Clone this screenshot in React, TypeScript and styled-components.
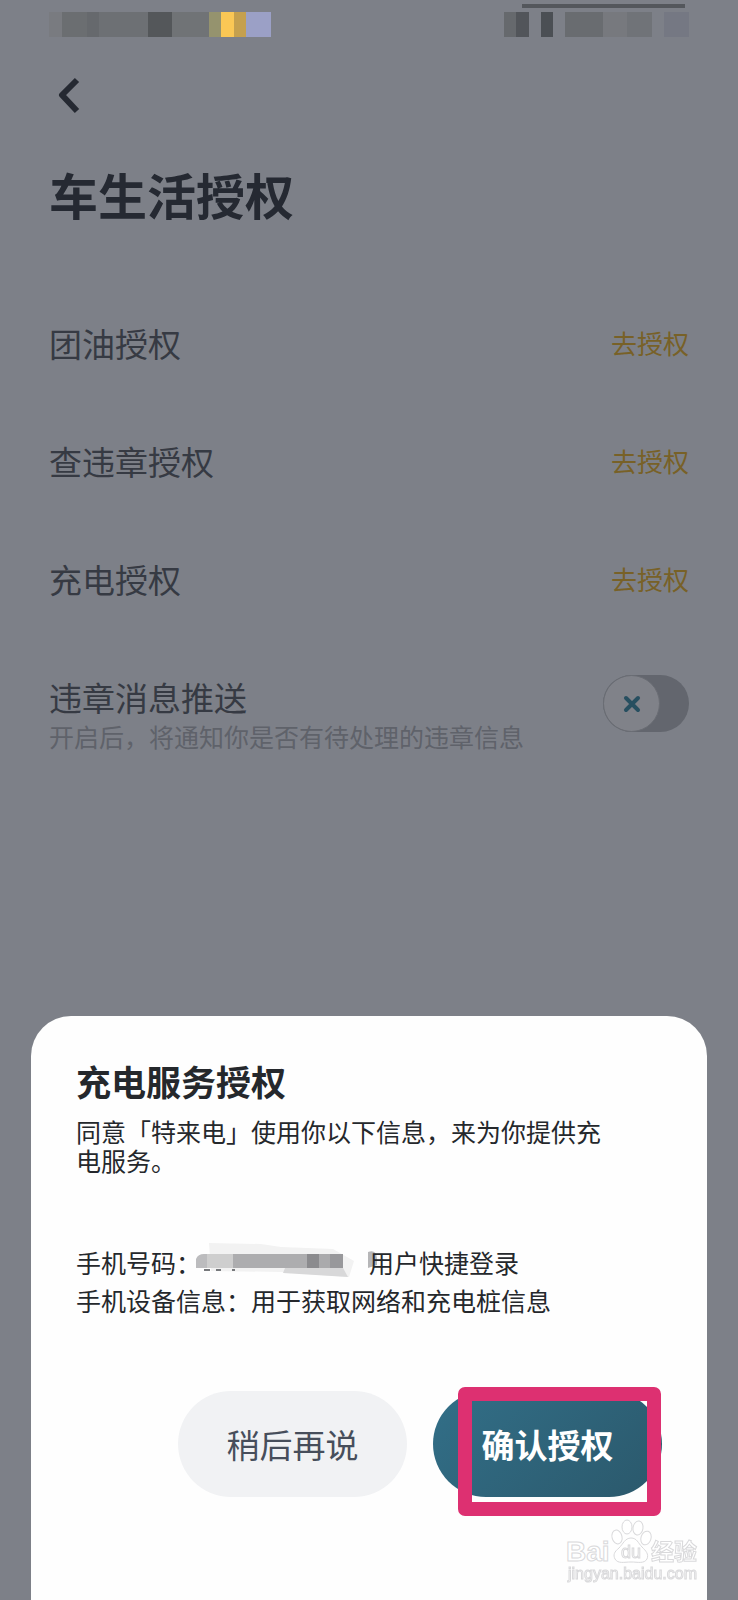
import React from "react";
import styled, { createGlobalStyle } from "styled-components";

const GlobalStyle = createGlobalStyle`
  *, *::before, *::after { box-sizing: border-box; }
  body {
    margin: 0;
    background: #7d8088;
    font-family: "Noto Sans CJK SC", sans-serif;
  }
  h1, h2, p, ul { margin: 0; padding: 0; }
  button, input { font-family: inherit; margin: 0; }
`;

const Page = styled.main`
  min-height: 100vh;
  padding: 0 49px;
  background: #7d8088;
`;

const StatusBar = styled.header`
  display: flex;
  justify-content: space-between;
  height: 64px;
`;

const BackButton = styled.button`
  display: block;
  width: 40px;
  height: 64px;
  padding: 0 0 0 9px;
  border: 0;
  background: none;

  svg { display: block; }
`;

const PageTitle = styled.h1`
  margin-top: 30px;
  color: #252932;
  font-size: 49px;
  font-weight: 700;
  line-height: 72px;
`;

const RowList = styled.ul`
  margin-top: 54px;
  list-style: none;
`;

const Row = styled.li<{ $top?: boolean }>`
  display: flex;
  align-items: ${(p) => (p.$top ? "flex-start" : "center")};
  justify-content: space-between;
  min-height: 118px;
  padding-top: ${(p) => (p.$top ? 37 : 0)}px;
`;

const RowLabel = styled.span`
  display: block;
  color: #363a43;
  font-size: 33px;
  line-height: 44px;
`;

const RowHint = styled.span`
  display: block;
  color: #5f626a;
  font-size: 25px;
  line-height: 34px;
`;

const GrantLink = styled.a`
  color: #786127;
  font-size: 26px;
  line-height: 40px;
  text-decoration: none;
`;

const SwitchBox = styled.span`
  display: grid;
  flex: none;
  width: 86px;
  height: 57px;

  > * { grid-area: 1 / 1; }
`;

const SwitchInput = styled.input`
  appearance: none;
  width: 100%;
  height: 100%;
  border-radius: 29px;
  background: #63666e;
`;

const Knob = styled.span`
  display: grid;
  place-items: center;
  width: 57px;
  height: 57px;
  border: 1px solid #6a6d74;
  border-radius: 50%;
  background: #808289;
  pointer-events: none;
`;

const SheetLayer = styled.div`
  position: fixed;
  inset: 0;
  display: flex;
  align-items: flex-end;
  padding: 0 31px;
`;

const Sheet = styled.section`
  position: relative;
  flex: 1;
  padding: 43px 45px 103px;
  border-radius: 40px 40px 0 0;
  background: #fefefe;
  color: #25282c;
`;

const SheetTitle = styled.h2`
  font-size: 35px;
  font-weight: 700;
  line-height: 44px;
`;

const SheetText = styled.p`
  max-width: 540px;
  margin-top: 14px;
  font-size: 25px;
  line-height: 29px;
`;

const InfoList = styled.div`
  margin-top: 68px;
  font-size: 25px;
`;

const InfoLine = styled.p`
  display: flex;
  align-items: center;
  line-height: 38px;

  svg { overflow: visible; flex: none; }
`;

const Actions = styled.div`
  display: flex;
  justify-content: flex-end;
  gap: 26px;
  margin-top: 72px;
`;

const ActionButton = styled.button<{ $primary?: boolean }>`
  width: 229px;
  height: 106px;
  padding: 0;
  border: 0;
  border-radius: 53px;
  background: ${(p) => (p.$primary ? "linear-gradient(135deg, #326f88, #2b586b)" : "#f1f2f4")};
  color: ${(p) => (p.$primary ? "#fff" : "#474e5b")};
  font-size: 33px;
  font-weight: ${(p) => (p.$primary ? 700 : 400)};
`;

const Marked = styled.div`
  position: relative;
`;

const MarkFrame = styled.span`
  position: absolute;
  inset: -4px 1px -19px 25px;
  border: 14px solid #dd3071;
  border-radius: 7px;
  pointer-events: none;
`;

const Watermark = styled.svg`
  position: absolute;
  right: 8px;
  bottom: 15px;
`;

type Block = [x: number, width: number, color: string];

const leftBlocks: Block[] = [
  [0, 13, "#797b80"],
  [13, 25, "#6b6e71"],
  [38, 12, "#66696d"],
  [50, 49, "#6d7074"],
  [99, 24, "#54575a"],
  [123, 37, "#707376"],
  [160, 12, "#95936e"],
  [172, 13, "#fac755"],
  [185, 12, "#c5a04e"],
  [197, 25, "#9ba0c6"],
];

const rightBlocks: Block[] = [
  [0, 12, "#66696d"],
  [12, 13, "#52555a"],
  [37, 12, "#4b4f54"],
  [61, 38, "#696c70"],
  [99, 24, "#77797e"],
  [123, 25, "#707378"],
  [160, 25, "#757883"],
];

function Blocks({ items }: { items: Block[] }) {
  return (
    <>
      {items.map(([x, w, c]) => (
        <rect key={x} x={x} y="12" width={w} height="25" fill={c} shapeRendering="crispEdges" />
      ))}
    </>
  );
}

function MaskedNumber() {
  return (
    <svg width="168" height="38" viewBox="0 0 168 38" aria-hidden="true">
      <path d="M8 0 L60 1 L80 4 L132 6 L153 18 L148 34 L105 31 L80 29 L10 28 Z" fill="#f2f2f2" />
      <path d="M84 25 H142 L147 34 L82 30 Z" fill="#d8d8d9" />
      <path d="M-5 16 Q-3 11 3 11 H32 V25 H-5 Z" fill="#bcbcbe" />
      <rect x="6" y="11" width="26" height="14" fill="#cecece" />
      <rect x="32" y="11" width="74" height="14" fill="#adadaf" />
      <rect x="106" y="11" width="12" height="14" fill="#8b8b8e" />
      <rect x="118" y="11" width="11" height="14" fill="#aaaaac" />
      <rect x="129" y="11" width="13" height="14" fill="#98989b" />
      <path d="M3 27 h6 M15 27 h5 M31 27 h3" stroke="#77797c" strokeWidth="2" />
      <path d="M167 9 Q175 6 176 15 V22 L167 25 Z" fill="#b6b6b8" />
    </svg>
  );
}

function BaiduWatermark() {
  return (
    <Watermark width="134" height="67" viewBox="0 0 134 67" fill="#fff" stroke="#d9d9db" strokeWidth="1">
      <text x="1" y="43" fontFamily="Liberation Sans, sans-serif" fontSize="28" fontWeight="700">Bai</text>
      <ellipse cx="52" cy="19" rx="5" ry="7" transform="rotate(-14 52 19)" />
      <ellipse cx="62" cy="9" rx="5" ry="7" />
      <ellipse cx="73" cy="10" rx="5" ry="7" transform="rotate(10 73 10)" />
      <ellipse cx="81" cy="20" rx="5" ry="7" transform="rotate(18 81 20)" />
      <path d="M66 20 C60 20 58 26 54 30 C49 34 48 37 50 41 C53 46 59 44 66 44 C73 44 79 46 82 41 C84 36 81 33 77 29 C73 25 72 20 66 20 Z" />
      <text x="56" y="40" fontFamily="Liberation Sans, sans-serif" fontSize="18">du</text>
      <text x="86" y="42" fontFamily="Noto Sans CJK SC, sans-serif" fontSize="23" fontWeight="700">经验</text>
      <text x="3" y="61" fontFamily="Liberation Sans, sans-serif" fontSize="16">jingyan.baidu.com</text>
    </Watermark>
  );
}

const grants = ["团油授权", "查违章授权", "充电授权"];

export default function App() {
  return (
    <>
      <GlobalStyle />
      <Page>
        <StatusBar>
          <svg width="222" height="40" aria-hidden="true">
            <Blocks items={leftBlocks} />
          </svg>
          <svg width="185" height="40" aria-hidden="true">
            <path d="M18 6 H181" stroke="#54575c" strokeWidth="4" />
            <Blocks items={rightBlocks} />
          </svg>
        </StatusBar>
        <BackButton aria-label="返回">
          <svg width="24" height="38" viewBox="0 0 24 38" fill="none" stroke="#252932" strokeWidth="6" strokeLinejoin="round">
            <path d="M19 3 L4 18 L19 34" />
          </svg>
        </BackButton>
        <PageTitle>车生活授权</PageTitle>
        <RowList>
          {grants.map((name) => (
            <Row key={name}>
              <RowLabel>{name}</RowLabel>
              <GrantLink href="#grant">去授权</GrantLink>
            </Row>
          ))}
          <Row $top>
            <label htmlFor="push">
              <RowLabel>违章消息推送</RowLabel>
              <RowHint>开启后，将通知你是否有待处理的违章信息</RowHint>
            </label>
            <SwitchBox>
              <SwitchInput id="push" type="checkbox" role="switch" />
              <Knob>
                <svg width="18" height="18" viewBox="0 0 18 18" stroke="#274f60" strokeWidth="4" strokeLinecap="round">
                  <path d="M3 3 L15 15 M15 3 L3 15" />
                </svg>
              </Knob>
            </SwitchBox>
          </Row>
        </RowList>
      </Page>
      <SheetLayer>
        <Sheet role="dialog" aria-labelledby="sheet-title">
          <SheetTitle id="sheet-title">充电服务授权</SheetTitle>
          <SheetText>同意「特来电」使用你以下信息，来为你提供充电服务。</SheetText>
          <InfoList>
            <InfoLine>
              手机号码：
              <MaskedNumber />
              用户快捷登录
            </InfoLine>
            <InfoLine>手机设备信息：用于获取网络和充电桩信息</InfoLine>
          </InfoList>
          <Actions>
            <ActionButton type="button">稍后再说</ActionButton>
            <Marked>
              <ActionButton type="button" $primary>确认授权</ActionButton>
              <MarkFrame />
            </Marked>
          </Actions>
          <BaiduWatermark />
        </Sheet>
      </SheetLayer>
    </>
  );
}
